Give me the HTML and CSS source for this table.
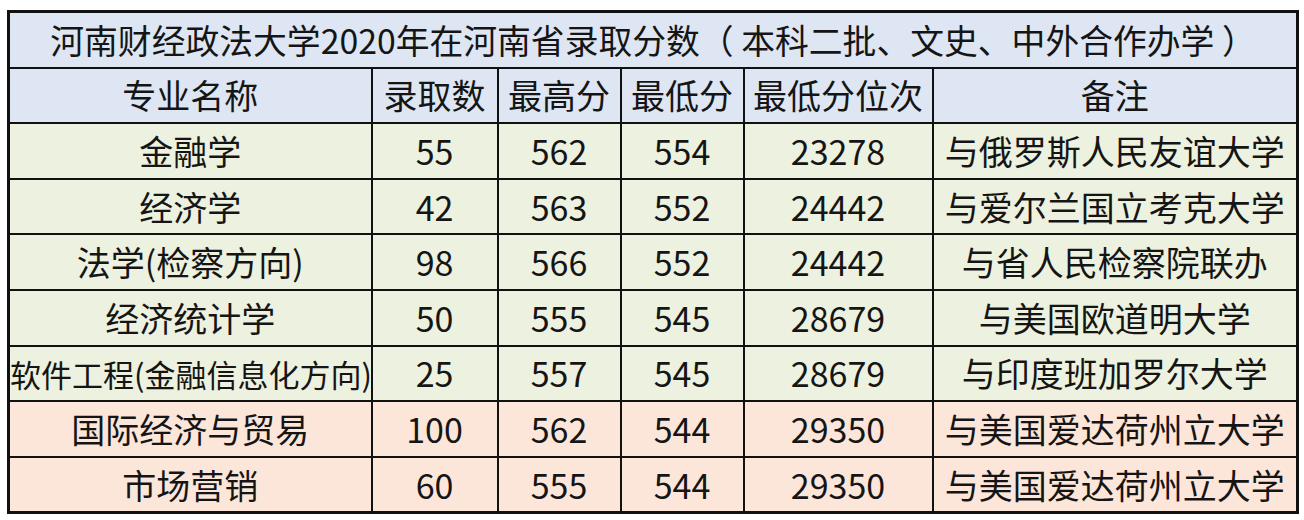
FILE: index.html
```html
<!DOCTYPE html>
<html lang="zh-CN">
<head>
<meta charset="utf-8">
<title>河南财经政法大学2020年在河南省录取分数</title>
<link rel="stylesheet" href="styles.css">
</head>
<body>
<table class="score-table">
  <colgroup>
    <col class="c-name">
    <col class="c-num">
    <col class="c-hi">
    <col class="c-lo">
    <col class="c-rank">
    <col class="c-note">
  </colgroup>
  <thead>
    <tr class="title-row"><th colspan="6">河南财经政法大学2020年在河南省录取分数（ 本科二批、文史、中外合作办学 ）</th></tr>
    <tr class="head-row">
      <th>专业名称</th><th>录取数</th><th>最高分</th><th>最低分</th><th>最低分位次</th><th>备注</th>
    </tr>
  </thead>
  <tbody>
    <tr class="green"><td>金融学</td><td>55</td><td>562</td><td>554</td><td>23278</td><td>与俄罗斯人民友谊大学</td></tr>
    <tr class="green"><td>经济学</td><td>42</td><td>563</td><td>552</td><td>24442</td><td>与爱尔兰国立考克大学</td></tr>
    <tr class="green"><td>法学(检察方向)</td><td>98</td><td>566</td><td>552</td><td>24442</td><td>与省人民检察院联办</td></tr>
    <tr class="green"><td>经济统计学</td><td>50</td><td>555</td><td>545</td><td>28679</td><td>与美国欧道明大学</td></tr>
    <tr class="green"><td class="narrow">软件工程(金融信息化方向)</td><td>25</td><td>557</td><td>545</td><td>28679</td><td>与印度班加罗尔大学</td></tr>
    <tr class="pink"><td>国际经济与贸易</td><td>100</td><td>562</td><td>544</td><td>29350</td><td>与美国爱达荷州立大学</td></tr>
    <tr class="pink"><td>市场营销</td><td>60</td><td>555</td><td>544</td><td>29350</td><td>与美国爱达荷州立大学</td></tr>
  </tbody>
</table>
</body>
</html>
```

FILE: styles.css
```css
html, body {
  margin: 0;
  padding: 0;
  background: #ffffff;
}
body {
  padding: 10px 0 0 7px;
  font-family: "Noto Sans CJK SC", "Noto Sans", sans-serif;
  color: #151515;
}
.score-table {
  border-collapse: collapse;
  table-layout: fixed;
  width: 1289px;
  border: 3px solid #111;
}
.c-name { width: 363px; }
.c-num { width: 126px; }
.c-hi { width: 123px; }
.c-lo { width: 123px; }
.c-rank { width: 189px; }
.c-note { width: 365px; }

.score-table th,
.score-table td {
  border: 2px solid #111;
  height: 53.6px;
  padding: 0;
  text-align: center;
  vertical-align: middle;
  font-weight: 400;
  font-size: 34px;
  line-height: 1;
  white-space: nowrap;
  overflow: hidden;
}
.title-row th {
  background: #dde6f2;
  font-size: 33.8px;
}
.head-row th {
  background: #dde6f2;
}
.green td {
  background: #edf1df;
}
.pink td {
  background: #fce6da;
}
.score-table td.narrow {
  font-size: 31px;
}
```
